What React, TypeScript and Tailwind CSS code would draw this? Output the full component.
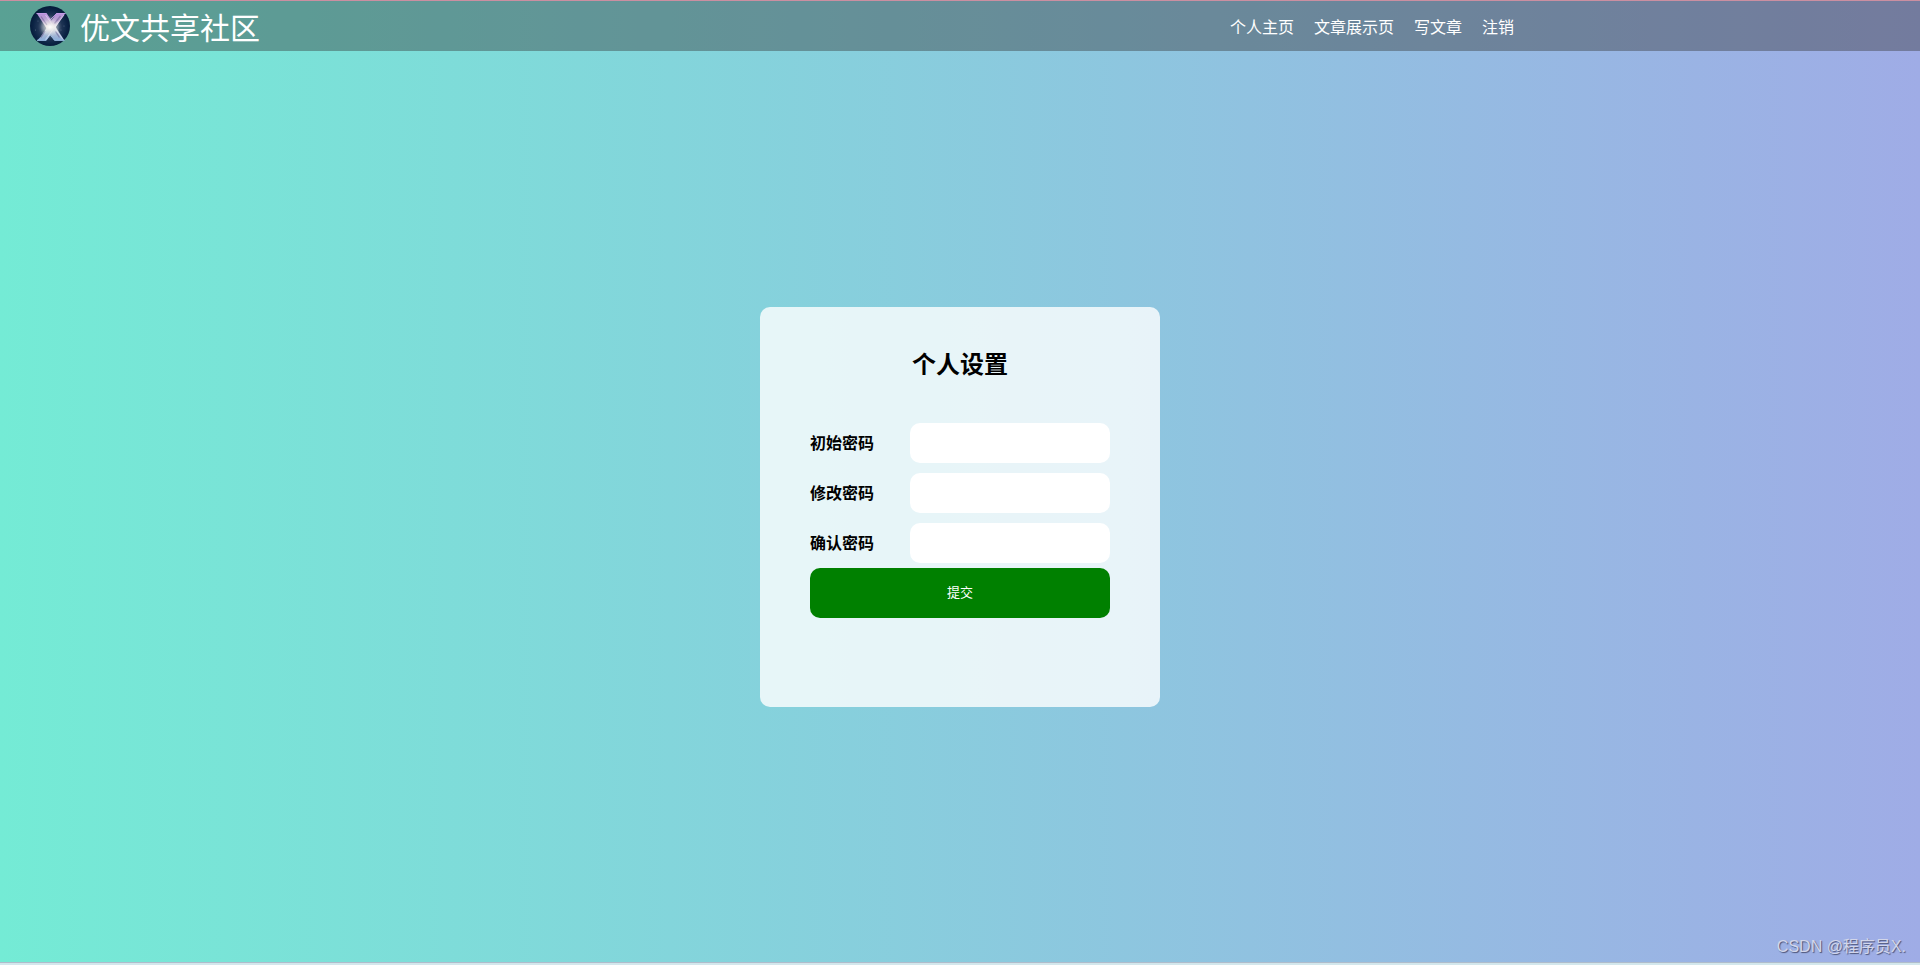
import React, { useState } from "react";

const navLinks = ["个人主页", "文章展示页", "写文章", "注销"];

const fields = [
  { id: "oldPassword", label: "初始密码" },
  { id: "newPassword", label: "修改密码" },
  { id: "confirmPassword", label: "确认密码" },
];

function Logo() {
  return (
    <svg viewBox="0 0 40 40" className="h-10 w-10" aria-hidden="true">
      <defs>
        <radialGradient id="logoSky" cx="50%" cy="52%" r="50%">
          <stop offset="0" stopColor="#a9b4be" />
          <stop offset="0.3" stopColor="#66768c" />
          <stop offset="0.6" stopColor="#1e3454" />
          <stop offset="0.85" stopColor="#0b2344" />
          <stop offset="1" stopColor="#061c3b" />
        </radialGradient>
        <linearGradient id="logoBar" gradientUnits="userSpaceOnUse" x1="0" y1="7" x2="0" y2="35">
          <stop offset="0" stopColor="#b78fdc" />
          <stop offset="0.25" stopColor="#b6a0d0" />
          <stop offset="0.5" stopColor="#efeeed" />
          <stop offset="0.75" stopColor="#a9b9d4" />
          <stop offset="1" stopColor="#86a9d8" />
        </linearGradient>
        <radialGradient id="logoGlow">
          <stop offset="0" stopColor="#fff" stopOpacity="0.95" />
          <stop offset="0.45" stopColor="#f3f0e8" stopOpacity="0.45" />
          <stop offset="1" stopColor="#fff" stopOpacity="0" />
        </radialGradient>
      </defs>
      <circle cx="20" cy="20" r="20" fill="url(#logoSky)" />
      {/* two crossing bars with flat feet */}
      <g fill="url(#logoBar)">
        <path d="M26.500 7H35.500L16.500 34.500H7L10.500 31z" />
        <path d="M6.500 7H16.500L34.500 34.500H24.500z" />
      </g>
      {/* dark facets inside the bars */}
      <path d="M11 10.500L17 19M30.500 10L24.500 17.500M15 25L11 31.500M25.500 25.500L29.500 31.500" fill="none" stroke="#67598f" strokeWidth="1.3" opacity="0.55" />
      <path d="M6.500 7.500H16L20 14L26.500 7.500H35.500" fill="none" stroke="#c39be6" strokeWidth="0.9" />
      <path d="M7 34.300H16L20 28.500L24.500 34.300H34.500" fill="none" stroke="#a4c6ee" strokeWidth="0.9" />
      <path d="M15.500 9L33 33.500M34 9L15.500 33.500" fill="none" stroke="#eee9f7" strokeWidth="0.7" opacity="0.8" />
      <circle cx="20" cy="21" r="10" fill="url(#logoGlow)" />
      <g fill="#8b9cb4">
        <circle cx="8" cy="15" r="0.4" />
        <circle cx="5.500" cy="24" r="0.4" />
        <circle cx="34" cy="20" r="0.4" />
        <circle cx="31" cy="24" r="0.4" />
      </g>
    </svg>
  );
}

export default function App() {
  const [values, setValues] = useState<Record<string, string>>({});

  const handleSubmit = (e: React.FormEvent) => {
    e.preventDefault();
    setValues({});
  };

  return (
    <div className="flex min-h-screen flex-col border-t border-[#cb8fa1] bg-[#d3e7ec] font-['Noto_Sans_CJK_SC',sans-serif]">
      <div className="relative flex flex-1 flex-col border-b border-[#b0bccb] bg-[linear-gradient(to_right,#74ebd5,#9face6)]">
        <header className="flex h-[50px] items-center bg-[#333333]/40 pl-[30px] text-white">
          <Logo />
          <span className="ml-2.5 text-[30px] leading-9">优文共享社区</span>
          <nav className="mr-[20%] ml-auto flex gap-5 pr-7">
            {navLinks.map((text) => (
              <a key={text} href="#" className="text-base leading-6">
                {text}
              </a>
            ))}
          </nav>
        </header>

        <main className="flex flex-1 items-center justify-center pt-px">
          <form
            onSubmit={handleSubmit}
            className="h-[400px] w-[400px] rounded-[10px] bg-white/80 px-[50px] pt-10 text-black"
          >
            <h2 className="mb-[39px] text-center text-2xl leading-8 font-bold">个人设置</h2>
            {fields.map((field) => (
              <div key={field.id} className="flex h-[50px] items-center">
                <label htmlFor={field.id} className="w-[100px] pb-0.5 text-base font-bold">
                  {field.label}
                </label>
                <input
                  id={field.id}
                  type="password"
                  value={values[field.id] ?? ""}
                  onChange={(e) => setValues({ ...values, [field.id]: e.target.value })}
                  className="h-10 min-w-0 flex-1 rounded-[10px] bg-white px-2.5 outline-none"
                />
              </div>
            ))}
            <button type="submit" className="h-[50px] w-full rounded-[10px] bg-[#008000] pb-0.5 text-[13px] text-white">
              提交
            </button>
          </form>
        </main>

        <span className="absolute right-3.5 bottom-[3px] font-['Liberation_Sans','Noto_Sans_CJK_SC',sans-serif] text-base leading-6 text-[#d2d6ea] [text-shadow:1px_1px_1px_#4b5275]">
          CSDN @程序员X.
        </span>
      </div>
      <div className="h-0.5" />
    </div>
  );
}
